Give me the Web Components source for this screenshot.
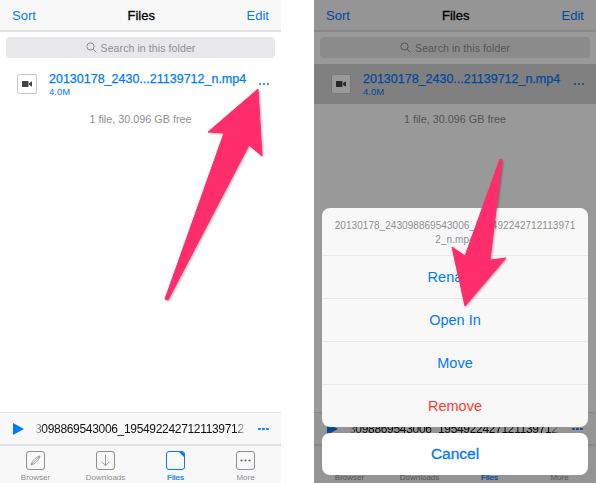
<!DOCTYPE html>
<html>
<head>
<meta charset="utf-8">
<title>Files</title>
<style>
  html, body { margin: 0; background: #fff; }
  body { font-family: "Liberation Sans", Arial, sans-serif; }
  main { display: flex; justify-content: space-between; width: 596px; height: 483px; }
</style>
</head>
<body>
<main>
  <app-screen style="width:281px">
    <pink-arrow points="258,89 208,132 224,133 165,299 168,300 249,145 262,156"></pink-arrow>
  </app-screen>
  <app-screen dimmed style="width:282px">
    <action-sheet name="20130178_243098869543006_1954922427121139712_n.mp4">
      <sheet-row>Rename</sheet-row>
      <sheet-row>Open In</sheet-row>
      <sheet-row>Move</sheet-row>
      <sheet-row danger>Remove</sheet-row>
    </action-sheet>
    <pink-arrow points="186,159 188,160 176,260 192,258 151,306 138,247 151,256"></pink-arrow>
  </app-screen>
</main>

<script>
// barra de arriba: Sort / Files / Edit
class NavBar extends HTMLElement {
  constructor() {
    super()
    this.attachShadow({mode: 'open'})
    this.shadowRoot.innerHTML = `
      <style>
        :host { display: flex; align-items: center; justify-content: space-between; height: 30px; padding: 0 12px; background: #f8f8f8; border-bottom: 2px solid #e2e2e2; font-size: 13px; color: #007aff; }
        b { color: #000; font-weight: 400; -webkit-text-stroke: .3px #000; }
      </style>
      <span>Sort</span><b>Files</b><span>Edit</span>`
  }
}

class SearchBox extends HTMLElement {
  constructor() {
    super()
    this.attachShadow({mode: 'open'})
    this.shadowRoot.innerHTML = `
      <style>
        :host { display: flex; align-items: center; justify-content: center; gap: 4px; height: 21px; margin: 5px 6px 0; background: #e8e8ea; border-radius: 4px; font-size: 10.5px; letter-spacing: .1px; color: #8e8e93; }
        svg { width: 11px; height: 11px; }
      </style>
      <svg viewBox="0 0 11 11" fill="none" stroke="#8e8e93" stroke-width="1"><circle cx="4.5" cy="4.5" r="3.6"/><path d="M7.2 7.2L10.4 10.4"/></svg>
      <span>Search in this folder</span>`
  }
}

// fila del archivo, con el atributo selected queda gris
class FileRow extends HTMLElement {
  constructor() {
    super()
    this.attachShadow({mode: 'open'})
    this.shadowRoot.innerHTML = `
      <style>
        :host { display: flex; align-items: center; height: 40px; margin-top: 6px; padding: 0 12px 0 17px; color: #007aff; }
        :host([selected]) { background: #d6d6d6; }
        .thumb { box-sizing: border-box; display: flex; align-items: center; justify-content: center; width: 20px; height: 20px; background: #fff; border: 1px solid #c8c8c8; border-radius: 2px; }
        .text { flex: 1; margin-left: 12px; min-width: 0; padding-top: 2px; }
        .name { font-size: 12.5px; line-height: 14px; white-space: nowrap; -webkit-text-stroke: .25px #007aff; }
        .size { font-size: 9.5px; line-height: 12px; }
      </style>
      <div class="thumb">
        <svg width="10" height="8" viewBox="0 0 10 8" fill="#444"><rect x="0" y="1" width="6.5" height="6" rx=".6"/><path d="M7 3.2L10 1.2V6.8L7 4.8Z"/></svg>
      </div>
      <div class="text">
        <div class="name">20130178_2430...21139712_n.mp4</div>
        <div class="size">4.0M</div>
      </div>
      <dot-menu></dot-menu>`
  }
}

// los tres puntitos azules
class DotMenu extends HTMLElement {
  constructor() {
    super()
    this.attachShadow({mode: 'open'})
    this.shadowRoot.innerHTML = `
      <style>
        :host { display: inline-flex; gap: 1.5px; }
        i { width: 2.5px; height: 2.5px; border-radius: 50%; background: #007aff; }
      </style>
      <i></i><i></i><i></i>`
  }
}

class PlayerBar extends HTMLElement {
  constructor() {
    super()
    this.attachShadow({mode: 'open'})
    this.shadowRoot.innerHTML = `
      <style>
        :host { display: flex; align-items: center; box-sizing: border-box; height: 34px; padding: 1px 13px 0; background: #f8f8f8; border-top: 1px solid #e2e2e2; border-bottom: 2px solid #e2e2e2; }
        svg { flex: none; }
        .title { flex: none; width: 212px; margin: 0 11px; white-space: nowrap; font-size: 12px; letter-spacing: -.32px; color: #111;
          -webkit-mask-image: linear-gradient(90deg, transparent 0, #000 8px, #000 200px, transparent 100%); }
      </style>
      <svg width="11" height="12" viewBox="0 0 11 12" fill="#007aff"><path d="M0 0L11 6L0 12Z"/></svg>
      <div class="title">3098869543006_1954922427121139712</div>
      <dot-menu></dot-menu>`
  }
}

class TabItem extends HTMLElement {
  constructor() {
    super()
    this.attachShadow({mode: 'open'})
    this.shadowRoot.innerHTML = `
      <style>
        :host { display: flex; flex-direction: column; align-items: center; width: 70px; color: #8e8e93; font-size: 8px; line-height: 9px; }
        :host([active]) { color: #007aff; -webkit-text-stroke: .2px #007aff; }
        .box { box-sizing: border-box; position: relative; display: flex; align-items: center; justify-content: center; width: 19px; height: 19px; border: 1px solid #8e8e93; border-radius: 3px; margin-bottom: 3px; overflow: hidden; }
        :host([active]) .box { border-color: #007aff; }
        :host([active]) .box::after { content: ""; position: absolute; top: -1px; right: -1px; border-style: solid; border-width: 0 7px 7px 0; border-color: transparent #007aff transparent transparent; }
      </style>
      <div class="box"><slot name="icon"></slot></div>
      <slot></slot>`
  }
}

class TabBar extends HTMLElement {
  constructor() {
    super()
    this.attachShadow({mode: 'open'})
    this.shadowRoot.innerHTML = `
      <style>
        :host { display: flex; box-sizing: border-box; height: 37px; padding: 5px 0 0 .5px; background: #f8f8f8; overflow: hidden; }
        svg { display: block; }
      </style>
      <tab-item>
        <svg slot="icon" width="11" height="11" viewBox="0 0 11 11" fill="none" stroke="#8e8e93" stroke-width=".8"><path d="M10 1C6.500 1.800 2.600 4.500 1 10C4.500 9.200 8.400 6.500 10 1Z"/><path d="M1 10L10 1"/></svg>
        Browser
      </tab-item>
      <tab-item>
        <svg slot="icon" width="11" height="13" viewBox="0 0 11 13" fill="none" stroke="#8e8e93" stroke-width=".9"><path d="M5.500 1V11.500M1.800 8L5.500 11.700L9.200 8"/></svg>
        Downloads
      </tab-item>
      <tab-item active>Files</tab-item>
      <tab-item>
        <svg slot="icon" width="11" height="3" viewBox="0 0 11 3" fill="#666"><circle cx="1.500" cy="1.500" r="1.100"/><circle cx="5.500" cy="1.500" r="1.100"/><circle cx="9.500" cy="1.500" r="1.100"/></svg>
        More
      </tab-item>`
  }
}

// una pantalla del telefono. Con dimmed le pone el velo oscuro encima
class AppScreen extends HTMLElement {
  constructor() {
    super()
    this.attachShadow({mode: 'open'})
    this.shadowRoot.innerHTML = `
      <style>
        :host { display: flex; flex-direction: column; position: relative; height: 483px; overflow: hidden; background: #fff; }
        .info { margin-top: 8px; text-align: center; font-size: 10.8px; line-height: 14px; color: #8e8e93; }
        .grow { flex: 1; }
        .veil { display: none; position: absolute; inset: 0; background: rgba(0,0,0,.4); }
        :host([dimmed]) .veil { display: block; }
      </style>
      <nav-bar></nav-bar>
      <search-box></search-box>
      <file-row></file-row>
      <div class="info">1 file, 30.096 GB free</div>
      <div class="grow"></div>
      <player-bar></player-bar>
      <tab-bar></tab-bar>
      <div class="veil"></div>
      <slot></slot>`
    if (this.hasAttribute('dimmed')) {
      this.shadowRoot.querySelector('file-row').setAttribute('selected', '')
    }
  }
}

class SheetRow extends HTMLElement {
  constructor() {
    super()
    this.attachShadow({mode: 'open'})
    this.shadowRoot.innerHTML = `
      <style>
        :host { display: flex; align-items: center; justify-content: center; box-sizing: border-box; height: 43px; border-top: 1px solid #e8e8e8; font-size: 14.5px; color: #007aff; }
        :host([danger]) { color: #ff3b30; }
      </style>
      <slot></slot>`
  }
}

class ActionSheet extends HTMLElement {
  constructor() {
    super()
    this.attachShadow({mode: 'open'})
    this.shadowRoot.innerHTML = `
      <style>
        :host { position: absolute; left: 8px; right: 8px; bottom: 8px; display: flex; flex-direction: column; gap: 6px; }
        .group { background: rgba(250,250,250,.985); border-radius: 8px; overflow: hidden; }
        .title { box-sizing: border-box; height: 47px; padding: 11px 11px 0; text-align: center; font-size: 10px; letter-spacing: .05px; line-height: 13.500px; color: #8e8e93; word-break: break-all; }
        .cancel { height: 42px; display: flex; align-items: center; justify-content: center; background: #fff; border-radius: 8px; font-size: 15.500px; color: #007aff; -webkit-text-stroke: .3px #007aff; }
      </style>
      <div class="group">
        <div class="title">${this.getAttribute('name')}</div>
        <slot></slot>
      </div>
      <div class="cancel">Cancel</div>`
  }
}

// flecha rosa dibujada encima de la captura
class PinkArrow extends HTMLElement {
  constructor() {
    super()
    this.attachShadow({mode: 'open'})
    this.shadowRoot.innerHTML = `
      <style>
        :host { position: absolute; inset: 0; pointer-events: none; }
        svg { display: block; width: 100%; height: 100%; filter: drop-shadow(1px 1px 1px rgba(0,0,0,.3)); }
      </style>
      <svg><polygon points="${this.getAttribute('points')}" fill="#ff2d6b" stroke="#ff2d6b" stroke-width="1" stroke-linejoin="round"/></svg>`
  }
}

customElements.define('dot-menu', DotMenu)
customElements.define('nav-bar', NavBar)
customElements.define('search-box', SearchBox)
customElements.define('file-row', FileRow)
customElements.define('player-bar', PlayerBar)
customElements.define('tab-item', TabItem)
customElements.define('tab-bar', TabBar)
customElements.define('sheet-row', SheetRow)
customElements.define('action-sheet', ActionSheet)
customElements.define('pink-arrow', PinkArrow)
customElements.define('app-screen', AppScreen)
</script>
</body>
</html>
